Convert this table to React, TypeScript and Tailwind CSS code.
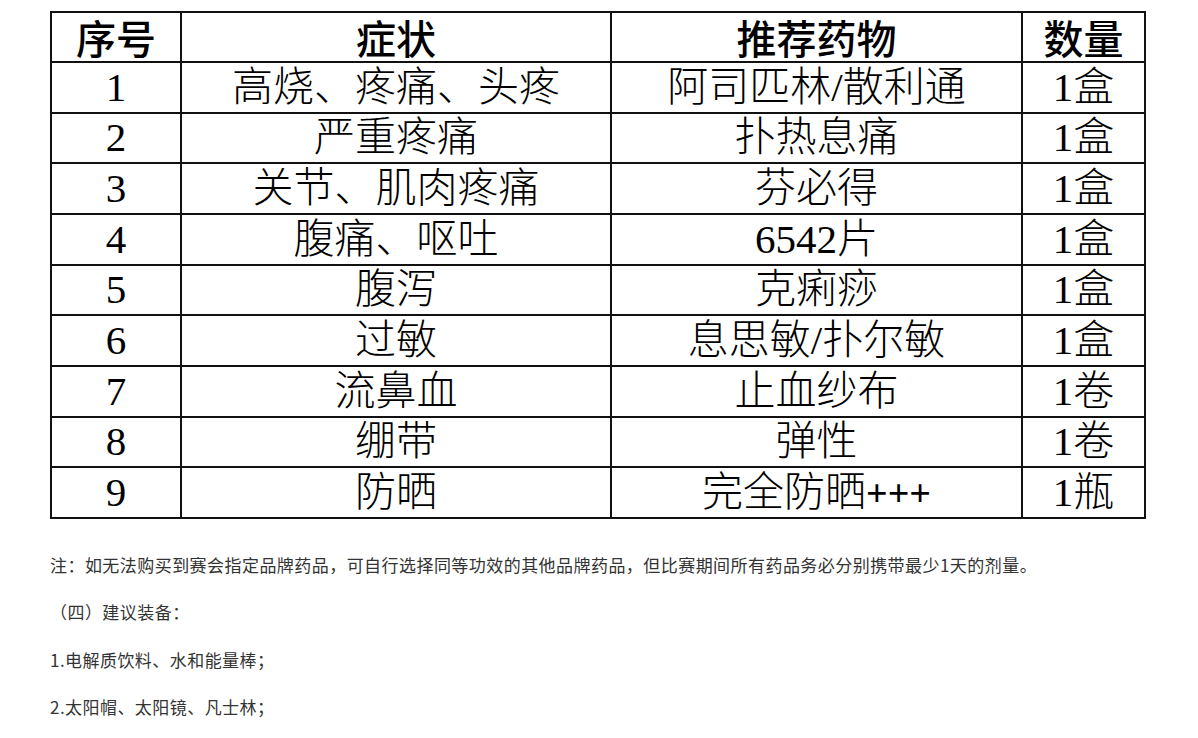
const rows: [string, string, React.ReactNode, string][] = [
  ['1', '高烧、疼痛、头疼', '阿司匹林/散利通', '1盒'],
  ['2', '严重疼痛', '扑热息痛', '1盒'],
  ['3', '关节、肌肉疼痛', '芬必得', '1盒'],
  ['4', '腹痛、呕吐', '6542片', '1盒'],
  ['5', '腹泻', '克痢痧', '1盒'],
  ['6', '过敏', '息思敏/扑尔敏', '1盒'],
  ['7', '流鼻血', '止血纱布', '1卷'],
  ['8', '绷带', '弹性', '1卷'],
  [
    '9',
    '防晒',
    <>
      完全防晒<span className="font-bold text-[38px]">+++</span>
    </>,
    '1瓶',
  ],
];

const widths = ['w-[130px]', 'w-[430px]', 'w-[411px]', 'w-[123px]'];
const headers = ['序号', '症状', '推荐药物', '数量'];

const App = () => {
  return (
    <div className="min-h-[738px] w-[1198px] bg-white pt-[11px]">
      <div className="ml-[50px] w-[1096px] border-l-2 border-t-2 border-[#111]">
        <div className="flex">
          {headers.map((h, i) => (
            <div
              key={h}
              className={`${widths[i]} h-[50px] flex items-center justify-center border-r-2 border-b-2 border-[#111] font-['Noto_Sans_CJK_SC',sans-serif] font-medium text-[40px] leading-none text-black`}
            >
              {h}
            </div>
          ))}
        </div>
        {rows.map((r) => (
          <div key={r[0]} className="flex">
            {r.map((c, i) => (
              <div
                key={i}
                className={`${widths[i]} h-[50.67px] flex items-center justify-center border-r-2 border-b-2 border-[#111] font-['Liberation_Serif','Noto_Sans_CJK_SC',serif] font-light text-[41px] leading-none text-black whitespace-nowrap`}
              >
                {c}
              </div>
            ))}
          </div>
        ))}
      </div>

      <div className="mt-[32px] ml-[50px] flex flex-col gap-[20px] font-['Noto_Sans_CJK_SC',sans-serif] text-[17px] leading-[27.5px] tracking-[0.45px] text-[#333]">
        <p>注：如无法购买到赛会指定品牌药品，可自行选择同等功效的其他品牌药品，但比赛期间所有药品务必分别携带最少1天的剂量。</p>
        <p>（四）建议装备：</p>
        <p>1.电解质饮料、水和能量棒；</p>
        <p>2.太阳帽、太阳镜、凡士林；</p>
      </div>
    </div>
  );
};

export default App;
